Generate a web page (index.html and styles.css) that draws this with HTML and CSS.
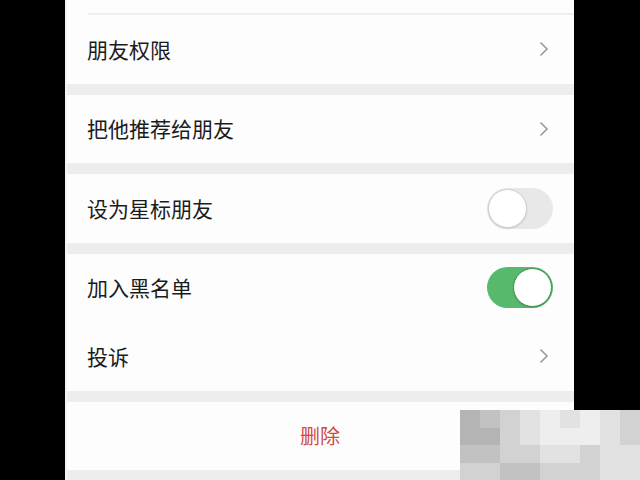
FILE: index.html
```html
<!DOCTYPE html>
<html lang="zh">
<head>
<meta charset="utf-8">
<link rel="stylesheet" href="styles.css">
</head>
<body>
<div class="screen">
  <div class="phone">
    <div class="top-stub"><div class="top-line"></div></div>
    <div class="group">
      <div class="row"><span class="label">朋友权限</span><svg class="chev" viewBox="0 0 10 16"><path d="M1.5 1.5 L8 8 L1.5 14.5" /></svg></div>
    </div>
    <div class="group">
      <div class="row"><span class="label">把他推荐给朋友</span><svg class="chev" viewBox="0 0 10 16"><path d="M1.5 1.5 L8 8 L1.5 14.5" /></svg></div>
    </div>
    <div class="group">
      <div class="row"><span class="label">设为星标朋友</span><span class="switch"><span class="knob"></span></span></div>
    </div>
    <div class="group">
      <div class="row"><span class="label">加入黑名单</span><span class="switch on"><span class="knob"></span></span></div>
      <div class="row"><span class="label">投诉</span><svg class="chev" viewBox="0 0 10 16"><path d="M1.5 1.5 L8 8 L1.5 14.5" /></svg></div>
    </div>
    <div class="group">
      <div class="row center"><span class="danger">删除</span></div>
    </div>
  </div>
  <div class="mosaic">
    <i class="m1"></i><i class="m2"></i><i class="m3"></i><i class="m4"></i><i class="m5"></i><i class="m4"></i><i class="m5"></i><i class="m4"></i><i class="m3"></i>
    <i class="m1"></i><i class="m1"></i><i class="m3"></i><i class="m4"></i><i class="m5"></i><i class="m5"></i><i class="m5"></i><i class="m4"></i><i class="m3"></i>
    <i class="m2"></i><i class="m2"></i><i class="m3"></i><i class="m3"></i><i class="m4"></i><i class="m4"></i><i class="m3"></i><i class="m4"></i><i class="m4"></i>
    <i class="m3"></i><i class="m3"></i><i class="m2"></i><i class="m2"></i><i class="m3"></i><i class="m3"></i><i class="m3"></i><i class="m4"></i><i class="m4"></i>
  </div>
</div>
</body>
</html>
```

FILE: styles.css
```css
* { box-sizing: border-box; }
html, body {
  margin: 0;
  padding: 0;
  background: #000;
}
body {
  width: 640px;
  height: 480px;
  overflow: hidden;
  font-family: "Noto Sans CJK SC", "Noto Sans", sans-serif;
}
.screen {
  position: relative;
  width: 640px;
  height: 480px;
  display: flex;
}
.phone {
  margin-left: 65px;
  width: 509px;
  height: 480px;
  background: #ededed;
  display: flex;
  flex-direction: column;
  gap: 11px;
  overflow: hidden;
  border-left: 2px solid #f4f4f4;
}
.top-stub {
  height: 15px;
  background: #fdfdfd;
  margin-bottom: -11px;
  flex: none;
  display: flex;
  flex-direction: column;
  justify-content: flex-end;
  padding-left: 21px;
}
.top-line {
  height: 2px;
  background: #efefef;
}
.group {
  background: #fdfdfd;
  flex: none;
}
.row {
  height: 68.5px;
  display: flex;
  align-items: center;
  justify-content: space-between;
  padding: 0 21px 0 20px;
}
.label {
  font-size: 21px;
  color: #1b1b1b;
  line-height: 1;
}
.chev {
  width: 10px;
  height: 16px;
  margin-right: 4px;
  fill: none;
  stroke: #9a9a9a;
  stroke-width: 1.6;
}
.switch {
  width: 66px;
  height: 41px;
  border-radius: 21px;
  background: #e8e8e8;
  display: flex;
  align-items: center;
  padding: 1px;
}
.switch .knob {
  width: 39px;
  height: 39px;
  border-radius: 50%;
  background: #ffffff;
  border: 1px solid #cfcfcf;
  box-shadow: 0 1px 2px rgba(0,0,0,0.12);
}
.switch.on {
  background: #56b96b;
  justify-content: flex-end;
}
.switch.on .knob {
  border-color: #3f8f55;
}
.center { justify-content: center; }
.danger {
  font-size: 20px;
  color: #cf4a44;
  line-height: 1;
}
.mosaic {
  position: absolute;
  left: 460px;
  top: 410px;
  width: 180px;
  height: 70px;
  display: grid;
  grid-template-columns: repeat(9, 20px);
  grid-template-rows: repeat(4, 17.5px);
}
.mosaic i { display: block; }
.m1 { background: #b4b4b4; }
.m2 { background: #c2c2c2; }
.m3 { background: #d2d2d2; }
.m4 { background: #e2e2e2; }
.m5 { background: #eeeeee; }
```
